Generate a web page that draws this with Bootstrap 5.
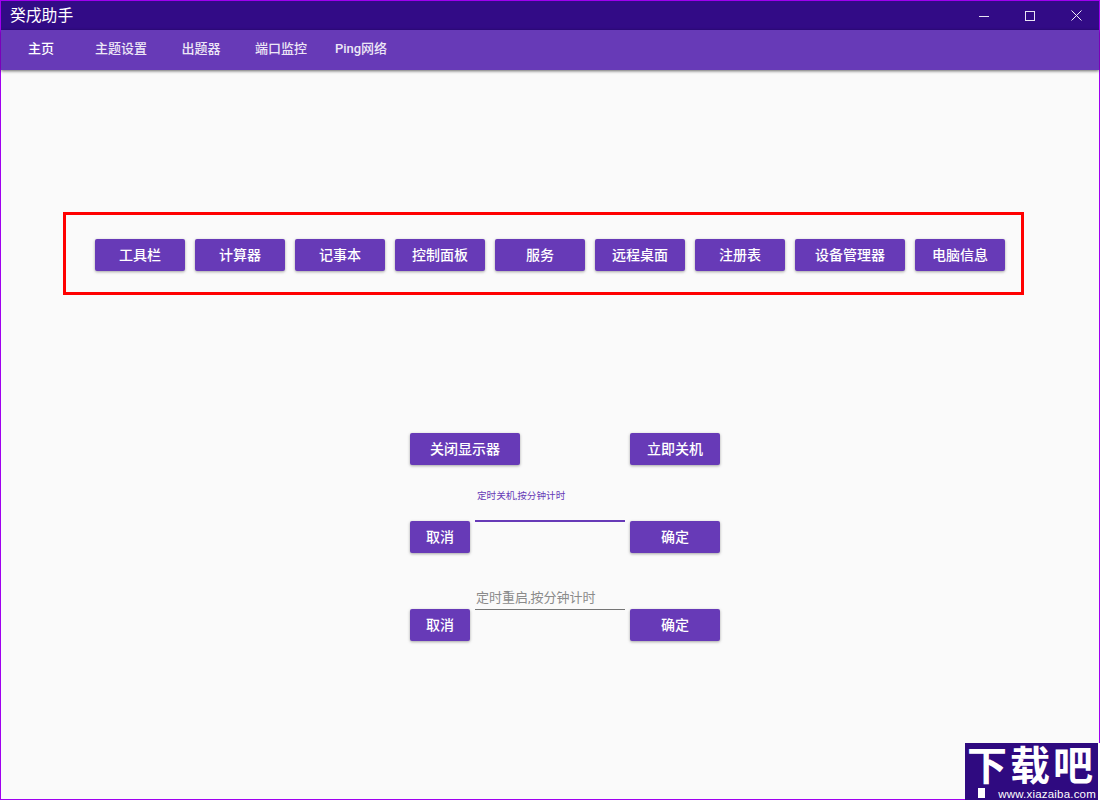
<!DOCTYPE html>
<html lang="zh">
<head>
<meta charset="utf-8">
<title>癸戌助手</title>
<link href="https://cdn.jsdelivr.net/npm/bootstrap@5.3.0/dist/css/bootstrap.min.css" rel="stylesheet">
<style>
html,body{margin:0;height:100%;overflow:hidden;background:#fafafa}
body{font-family:Roboto,"Noto Sans CJK SC",sans-serif}
.app-window{width:1100px;height:800px;border:1px solid #a000f0;background:#fafafa;position:relative;display:flex;flex-direction:column}
.app-title{height:29px;background:#320b86;color:#fff;font-size:15.8px;padding-left:9px;line-height:29px;flex:none}
.win-btn{width:46px;height:29px;display:flex;align-items:center;justify-content:center}
.app-nav{height:40px;background:#673ab7;box-shadow:0 1px 3px rgba(0,0,0,.6);flex:none;position:relative}
.app-nav .nav-link{width:80px;height:40px;padding:0;line-height:38px;text-align:center;color:#ede7f6;font-size:13px;font-weight:500}
.app-nav .nav-link.active-tab{color:#fff}
.md-btn.btn{--bs-btn-padding-x:0;--bs-btn-padding-y:0;--bs-btn-border-width:0;--bs-btn-bg:#673ab7;--bs-btn-color:#fff;--bs-btn-font-size:14px;--bs-btn-font-weight:500;--bs-btn-line-height:32px;--bs-btn-border-radius:2px;height:32px;box-shadow:0 1px 3px rgba(0,0,0,.35)}
.w-90{width:90px}.w-110{width:110px}
.tool-box{width:961px;height:83px;margin:142px 0 0 62px;border:3px solid #f00;padding:24px 0 0 29px;gap:10px}
.power-grid{display:grid;grid-template-columns:60px 150px 90px;column-gap:5px;grid-template-rows:32px 56px 32px 56px 32px;width:310px;margin:138px 0 0 409px}
.span-two{grid-column:1/3;width:110px}
.time-field{align-self:end;height:40px;position:relative}
.time-field.focused{border-bottom:2px solid #673ab7;margin-bottom:-1px}
.time-field.idle{border-bottom:1px solid #757575;margin-bottom:-1px}
.float-label{position:absolute;left:2px;bottom:18px;font-size:9.6px;line-height:12px;color:#673ab7;white-space:nowrap}
.hint-label{position:absolute;left:1px;bottom:2px;font-size:13px;line-height:18px;color:#8a8a8a;white-space:nowrap}
.site-mark{position:absolute;right:-1px;bottom:-1px;width:135px;height:57px;background:#fff}
.site-mark-inner{position:absolute;left:0;top:0;width:133px;height:57px;background:#2f0a80;color:#fff}
.mark-big{position:absolute;left:2px;top:0;font-family:"Liberation Sans","Noto Sans CJK SC",sans-serif;font-size:40px;line-height:46px;font-weight:700;letter-spacing:3px;white-space:nowrap}
.mark-stem{position:absolute;left:13px;top:45px;width:7px;height:10px;background:#fff}
.mark-url{position:absolute;right:2px;bottom:0;font-size:11.5px;line-height:11px;letter-spacing:.2px;font-family:"Liberation Sans",sans-serif}
</style>
</head>
<body>
<div class="app-window">
  <div class="app-title d-flex">
    <span>癸戌助手</span>
    <div class="d-flex ms-auto">
      <div class="win-btn"><svg width="10" height="10" viewBox="0 0 10 10"><path d="M0 5.5H10" stroke="#e8e4f4" fill="none"/></svg></div>
      <div class="win-btn"><svg width="10" height="10" viewBox="0 0 10 10"><rect x=".5" y=".5" width="9" height="9" stroke="#e8e4f4" fill="none"/></svg></div>
      <div class="win-btn"><svg width="11" height="11" viewBox="0 0 11 11"><path d="M.5 .5L10.5 10.5M10.5 .5L.5 10.5" stroke="#f0edf8" fill="none"/></svg></div>
    </div>
  </div>
  <nav class="app-nav nav">
    <a class="nav-link active-tab" href="#">主页</a>
    <a class="nav-link" href="#">主题设置</a>
    <a class="nav-link" href="#">出题器</a>
    <a class="nav-link" href="#">端口监控</a>
    <a class="nav-link" href="#">Ping网络</a>
  </nav>
  <main class="flex-grow-1">
    <div class="tool-box d-flex align-items-start">
      <button class="btn md-btn w-90">工具栏</button>
      <button class="btn md-btn w-90">计算器</button>
      <button class="btn md-btn w-90">记事本</button>
      <button class="btn md-btn w-90">控制面板</button>
      <button class="btn md-btn w-90">服务</button>
      <button class="btn md-btn w-90">远程桌面</button>
      <button class="btn md-btn w-90">注册表</button>
      <button class="btn md-btn w-110">设备管理器</button>
      <button class="btn md-btn w-90">电脑信息</button>
    </div>
    <div class="power-grid">
      <button class="btn md-btn span-two">关闭显示器</button>
      <button class="btn md-btn" style="grid-column:3">立即关机</button>
      <div class="time-field focused" style="grid-column:2;grid-row:2"><span class="float-label">定时关机,按分钟计时</span></div>
      <button class="btn md-btn" style="grid-column:1;grid-row:3">取消</button>
      <button class="btn md-btn" style="grid-column:3;grid-row:3">确定</button>
      <div class="time-field idle" style="grid-column:2;grid-row:4"><span class="hint-label">定时重启,按分钟计时</span></div>
      <button class="btn md-btn" style="grid-column:1;grid-row:5">取消</button>
      <button class="btn md-btn" style="grid-column:3;grid-row:5">确定</button>
    </div>
  </main>
  <div class="site-mark"><div class="site-mark-inner"><span class="mark-big">下载吧</span><span class="mark-stem"></span><span class="mark-url">www.xiazaiba.com</span></div></div>
</div>
<script src="https://cdn.jsdelivr.net/npm/bootstrap@5.3.0/dist/js/bootstrap.bundle.min.js"></script>
</body>
</html>
